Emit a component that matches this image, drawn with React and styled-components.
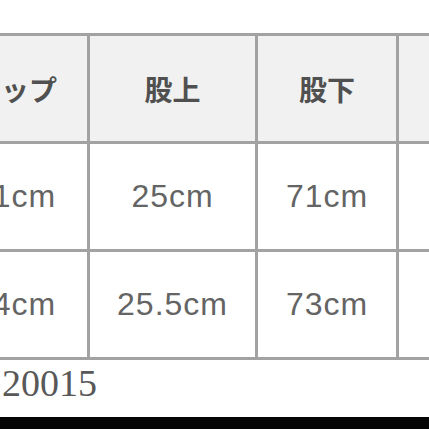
import React from "react";
import styled, { createGlobalStyle } from "styled-components";

const Global = createGlobalStyle`
  html, body {
    margin: 0;
    padding: 0;
    background: #ffffff;
    width: 429px;
    height: 429px;
    overflow: hidden;
  }
  #root { width: 429px; height: 429px; }
`;

const Page = styled.div`
  width: 429px;
  height: 429px;
  overflow: hidden;
  display: flex;
  flex-direction: column;
  background: #ffffff;
`;

const Table = styled.div`
  margin-top: 33px;
  margin-left: -60px;
  display: grid;
  grid-template-columns: 144px 165px 138px 140px;
  grid-auto-rows: 105px;
  gap: 3px;
  padding: 3px;
  background: #a2a2a2;
  width: max-content;
`;

const Cell = styled.div`
  display: flex;
  align-items: center;
  justify-content: center;
  white-space: nowrap;
  background: ${(p) => (p.$head ? "#f1f1f1" : "#ffffff")};
  color: ${(p) => (p.$head ? "#505050" : "#646464")};
  font-family: ${(p) =>
    p.$head
      ? '"Noto Sans CJK JP", sans-serif'
      : '"Liberation Sans", Arial, sans-serif'};
  font-weight: ${(p) => (p.$head ? 700 : 400)};
  font-size: ${(p) => (p.$head ? "28px" : "32px")};
  letter-spacing: ${(p) => (p.$head ? "0" : "1px")};
`;

const Caption = styled.div`
  margin-top: 4px;
  padding-left: 2px;
  height: 37px;
  font-family: "Liberation Serif", "Times New Roman", serif;
  font-size: 38px;
  line-height: 1;
  color: #585858;
`;

const BlackBar = styled.div`
  margin-top: 16px;
  flex: 1;
  background: #050505;
`;

const header = ["ヒップ", "股上", "股下", "ワタリ"];
const rows = [
  ["91cm", "25cm", "71cm", "19cm"],
  ["94cm", "25.5cm", "73cm", "20cm"],
];

export default function App() {
  return (
    <>
      <Global />
      <Page>
        <Table>
          {header.map((h) => (
            <Cell $head key={h}>
              {h}
            </Cell>
          ))}
          {rows.map((r, i) =>
            r.map((v, j) => <Cell key={`${i}-${j}`}>{v}</Cell>)
          )}
        </Table>
        <Caption>20015</Caption>
        <BlackBar />
      </Page>
    </>
  );
}
